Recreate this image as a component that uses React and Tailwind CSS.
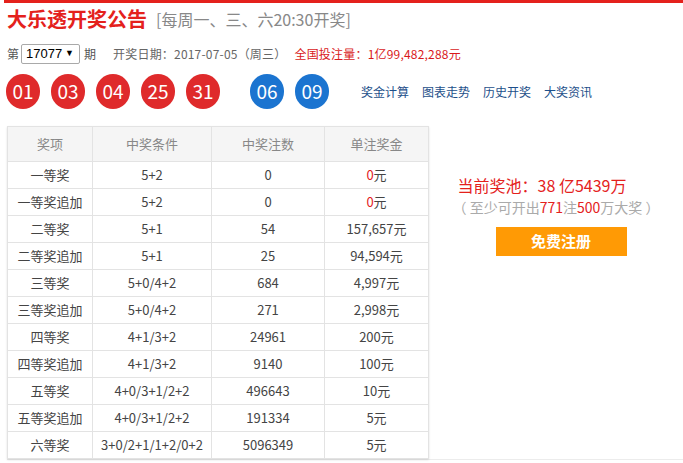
import React from "react";

const rows = [
  ["一等奖", "5+2", "0", "0", true],
  ["一等奖追加", "5+2", "0", "0", true],
  ["二等奖", "5+1", "54", "157,657", false],
  ["二等奖追加", "5+1", "25", "94,594", false],
  ["三等奖", "5+0/4+2", "684", "4,997", false],
  ["三等奖追加", "5+0/4+2", "271", "2,998", false],
  ["四等奖", "4+1/3+2", "24961", "200", false],
  ["四等奖追加", "4+1/3+2", "9140", "100", false],
  ["五等奖", "4+0/3+1/2+2", "496643", "10", false],
  ["五等奖追加", "4+0/3+1/2+2", "191334", "5", false],
  ["六等奖", "3+0/2+1/1+2/0+2", "5096349", "5", false],
];

function Ball({ n, blue }) {
  return (
    <div
      className={`w-[34px] h-[35px] rounded-full flex items-center justify-center text-white text-[19px] ${
        blue ? "bg-[#1b74d0]" : "bg-[#df2a2b]"
      }`}
    >
      {n}
    </div>
  );
}

export default function App() {
  const font = { fontFamily: '"Microsoft YaHei", "Noto Sans CJK SC", "Noto Sans", sans-serif' };
  return (
    <div className="w-[683px] h-[463px] bg-white overflow-hidden" style={font}>
      <div className="ml-[4px] h-[3px] bg-[#e4211c]" />
      <div className="pl-[7px] h-[32px] flex items-center">
        <span className="text-[20px] font-bold text-[#e4211c] leading-none">大乐透开奖公告</span>
        <span className="ml-[9px] text-[16px] text-[#888] leading-none">[每周一、三、六20:30开奖]</span>
      </div>
      <div className="mt-[9px] pl-[7px] h-[20px] flex items-center text-[12px] text-[#555]">
        <span>第</span>
        <div className="ml-[2px] w-[59px] h-[20px] border border-[#a9a9a9] rounded-[2px] flex items-center justify-between pl-[4px] pr-[5px] text-[13px] text-black" style={{ fontFamily: '"Liberation Sans", Arial, sans-serif' }}>
          <span>17077</span>
          <span className="text-[9px]">▼</span>
        </div>
        <span className="ml-[4px]">期</span>
        <span className="ml-[17px] text-[#666] tracking-[0.2px]">开奖日期：2017-07-05（周三）</span>
        <span className="ml-[8px] text-[#d9191b] tracking-[0.2px]">全国投注量：1亿99,482,288元</span>
      </div>
      <div className="mt-[10px] pl-[6px] h-[35px] flex items-center">
        <div className="flex gap-[11px]">
          <Ball n="01" />
          <Ball n="03" />
          <Ball n="04" />
          <Ball n="25" />
          <Ball n="31" />
        </div>
        <div className="ml-[30px] flex gap-[11px]">
          <Ball n="06" blue />
          <Ball n="09" blue />
        </div>
        <div className="ml-[32px] flex gap-[13px] text-[12px] text-[#1d4f8a]">
          <span>奖金计算</span>
          <span>图表走势</span>
          <span>历史开奖</span>
          <span>大奖资讯</span>
        </div>
      </div>
      <div className="mt-[17px] ml-[7px] flex border-b border-[#ececec]">
        <table className="border-collapse table-fixed text-center shadow-[0_1px_2px_rgba(0,0,0,0.12)] border border-[#e3e3e3]">
          <colgroup>
            <col className="w-[85px]" />
            <col className="w-[119px]" />
            <col className="w-[113px]" />
            <col className="w-[104px]" />
          </colgroup>
          <thead>
            <tr className="h-[35px] bg-[#f5f5f5] text-[13px] text-[#888]">
              <th className="font-normal border border-[#e3e3e3]">奖项</th>
              <th className="font-normal border border-[#e3e3e3]">中奖条件</th>
              <th className="font-normal border border-[#e3e3e3]">中奖注数</th>
              <th className="font-normal border border-[#e3e3e3]">单注奖金</th>
            </tr>
          </thead>
          <tbody className="text-[13px] text-[#444]">
            {rows.map((r, i) => (
              <tr key={i} className="h-[27px]">
                <td className="border border-[#e3e3e3] p-0">{r[0]}</td>
                <td className="border border-[#e3e3e3] p-0">{r[1]}</td>
                <td className="border border-[#e3e3e3] p-0">{r[2]}</td>
                <td className="border border-[#e3e3e3] p-0">
                  <span className={r[4] ? "text-[#e4211c]" : ""}>{r[3]}</span>元
                </td>
              </tr>
            ))}
          </tbody>
        </table>
        <div className="flex-1 flex flex-col items-center pt-[48px]">
          <div className="text-[16px] leading-[23px] text-[#e4211c] -ml-[28px]">当前奖池：38 亿5439万</div>
          <div className="text-[14px] leading-[21px] text-[#aaa]">
            （ 至少可开出<span className="text-[#e4211c]">771</span>注<span className="text-[#e4211c]">500</span>万大奖 ）
          </div>
          <div className="mt-[9px] ml-[10px] w-[131px] h-[29px] bg-[#ff9a05] flex items-center justify-center text-white font-bold text-[15px]">
            免费注册
          </div>
        </div>
      </div>
    </div>
  );
}
